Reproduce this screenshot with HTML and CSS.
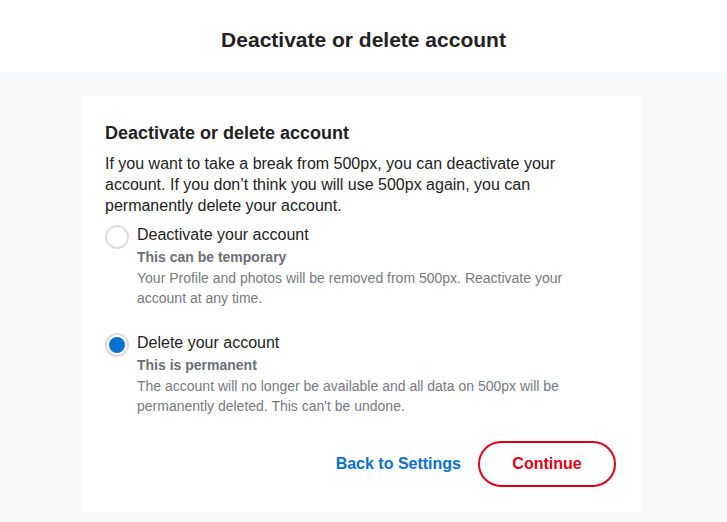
FILE: index.html
```html
<!DOCTYPE html>
<html lang="en">
<head>
<meta charset="utf-8">
<title>Deactivate or delete account</title>
<link rel="stylesheet" href="styles.css">
</head>
<body>
<header class="topbar">
  <h1 class="topbar-title">Deactivate or delete account</h1>
</header>
<main class="page">
  <section class="card">
    <h2 class="card-title">Deactivate or delete account</h2>
    <p class="intro">If you want to take a break from 500px, you can deactivate your account. If you don’t think you will use 500px again, you can permanently delete your account.</p>
    <div class="options">
      <label class="option">
        <span class="radio"></span>
        <span class="option-body">
          <span class="option-label">Deactivate your account</span>
          <span class="option-sub">This can be temporary</span>
          <span class="option-desc">Your Profile and photos will be removed from 500px. Reactivate your account at any time.</span>
        </span>
      </label>
      <label class="option">
        <span class="radio radio-checked"></span>
        <span class="option-body">
          <span class="option-label">Delete your account</span>
          <span class="option-sub">This is permanent</span>
          <span class="option-desc">The account will no longer be available and all data on 500px will be permanently deleted. This can't be undone.</span>
        </span>
      </label>
    </div>
    <div class="actions">
      <a class="link-back" href="#">Back to Settings</a>
      <button class="btn-continue" type="button">Continue</button>
    </div>
  </section>
</main>
</body>
</html>
```
FILE: styles.css
```css
* { box-sizing: border-box; }
html, body {
  margin: 0;
  padding: 0;
  font-family: "Liberation Sans", Arial, Helvetica, sans-serif;
  color: #222222;
  background: #f7f8fa;
}
.topbar {
  height: 72px;
  background: #ffffff;
  display: flex;
  align-items: center;
  justify-content: center;
}
.topbar-title {
  margin: 0;
  font-size: 21px;
  font-weight: 700;
  line-height: 24px;
  color: #222222;
  position: relative;
  top: 4px;
}
.page {
  padding: 24px 0 10px;
  min-height: 450px;
}
.card {
  width: 560px;
  margin: 0 86px 0 81px;
  background: #ffffff;
  padding: 25px 25px 25px 24px;
}
.card-title {
  margin: 0;
  font-size: 18px;
  font-weight: 700;
  line-height: 24px;
  color: #222222;
}
.intro {
  margin: 8px 0 0;
  font-size: 16px;
  line-height: 21px;
  color: #222222;
}
.options {
  margin-top: 8px;
  display: flex;
  flex-direction: column;
  gap: 24px;
}
.option {
  display: flex;
  gap: 8px;
  cursor: pointer;
}
.radio {
  flex: none;
  width: 24px;
  height: 24px;
  border-radius: 50%;
  border: 2px solid #dcdde0;
  background: #ffffff;
  margin-top: 1px;
  display: flex;
  align-items: center;
  justify-content: center;
}
.radio-checked::after {
  content: "";
  width: 16px;
  height: 16px;
  border-radius: 50%;
  background: #0870d1;
}
.option-body {
  display: flex;
  flex-direction: column;
  max-width: 450px;
}
.option-label {
  font-size: 16px;
  line-height: 22px;
  color: #222222;
}
.option-sub {
  font-size: 14px;
  font-weight: 700;
  line-height: 20px;
  color: #6b6f75;
  margin-top: 1px;
}
.option-desc {
  font-size: 14px;
  line-height: 20px;
  color: #777a80;
  margin-top: 1px;
}
.actions {
  margin-top: 25px;
  display: flex;
  justify-content: flex-end;
  align-items: center;
  gap: 17px;
}
.link-back {
  font-size: 16px;
  font-weight: 700;
  color: #0870d1;
  text-decoration: none;
}
.btn-continue {
  width: 138px;
  height: 46px;
  border: 2px solid #e1001a;
  border-radius: 23px;
  background: #ffffff;
  color: #e1001a;
  font-family: "Liberation Sans", Arial, Helvetica, sans-serif;
  font-size: 16px;
  font-weight: 700;
  cursor: pointer;
}
```
